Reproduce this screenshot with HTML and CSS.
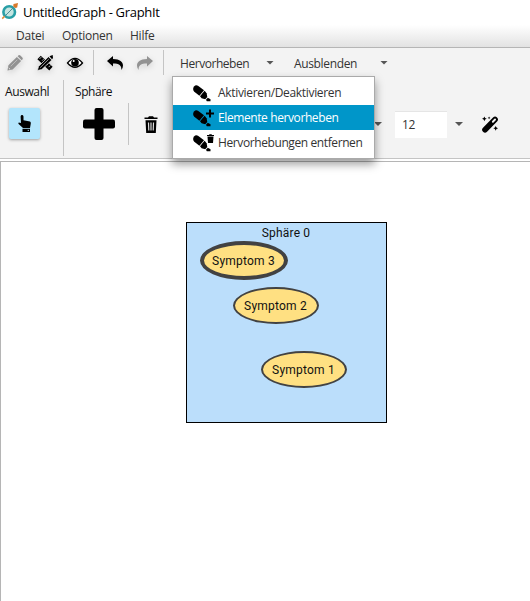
FILE: index.html
```html
<!DOCTYPE html>
<html lang="de">
<head>
<meta charset="utf-8">
<title>UntitledGraph - GraphIt</title>
<link rel="stylesheet" href="styles.css">
</head>
<body>
<svg class="defs" width="0" height="0">
  <symbol id="marker" viewBox="0 0 18 17">
    <path d="M1 1.600Q2.800-.5 5 .8L11 5.300 6.400 10.700 1.300 6.800Q-.9 4.200 1 1.600Z"/>
    <path d="M11.600 5.800 13.600 8.200 14.300 12 12.200 14.200 8.600 13.200 7 11.200Z"/>
    <path d="M14.800 12.700 17.500 14.200V16.300H13.800L13 14.700Z"/>
  </symbol>
  <symbol id="undo" viewBox="0 0 16 14">
    <path d="M0 5 6 0V3C13 3 16 6 16 9.500Q16 12 14.300 14C14.800 9.500 12 7.600 6 7.600V10.500Z"/>
  </symbol>
</svg>
<header class="titlebar">
  <svg class="logo" viewBox="0 0 18 18">
    <circle cx="8.200" cy="10" r="5.800" fill="#c4e5e1" stroke="#299fa6" stroke-width="2.600"/>
    <path d="M3.500 14.500 14 4" stroke="#4c8c93" stroke-width="1"/>
    <path d="M12.500 2 17 1l-.8 4.500-2 .5-2-1.800z" fill="#d8792b"/>
    <path d="M1.200 16.600 3.600 14.200" stroke="#e28a36" stroke-width="1.500"/>
  </svg>
  <h1>UntitledGraph - GraphIt</h1>
</header>
<nav class="menubar"><span class="m-datei">Datei</span><span class="m-opt">Optionen</span><span>Hilfe</span></nav>
<div class="toolbar">
  <div class="row-top">
    <svg class="pencil" viewBox="0 0 17 17"><path fill="#929292" d="M.5 16.500 1.500 11 10.500 2 15 6.500 6 15.500ZM11.300 1.200 12.300.3Q13.300-.2 14.200.6L16.300 2.700Q17.200 3.800 16.400 4.800L15.600 5.700Z"/><path d="M4 12 11 5" stroke="#c8c8c8" stroke-width=".8"/><path d="M1.800 13.800 3.300 15.200" stroke="#eee"/></svg>
    <svg class="tools" viewBox="0 0 17 16"><path d="M2.200 2.200 14.800 14" stroke="#000" stroke-width="5.200"/><path d="M4.500 1.800 2.700 3.700M7 4 5.500 5.500M11.800 8.600 10.300 10.200M14 10.700 12.400 12.400" stroke="#f3f3f3" stroke-width=".8"/><path d="M.3 16 1.700 11.500 12.200 1.300 15.800 4.800 5.100 15Z" stroke="#f3f3f3" stroke-width=".8"/><path d="M3.400 12.900 12.500 3.900" stroke="#bbb" stroke-width=".9"/><path d="M13.200.7 16.700-.4 17 2.600 16 4Z"/></svg>
    <svg class="eye" viewBox="0 0 16 12"><path d="M.5 6Q8-3.300 15.500 6 8 14.500.5 6Z" fill="#fff" stroke="#000" stroke-width="1.300"/><circle cx="8" cy="5.700" r="3.800"/><circle cx="6.700" cy="4" r="1" fill="#fff"/></svg>
    <i class="sep sep-a"></i>
    <svg class="undo"><use href="#undo"/></svg>
    <svg class="redo"><use href="#undo"/></svg>
    <i class="sep sep-b"></i>
    <span class="t-herv">Hervorheben</span><i class="caret"></i>
    <span class="t-aus">Ausblenden</span><i class="caret"></i>
  </div>
  <div class="row-main">
    <section class="group pick"><h2>Auswahl</h2>
      <button class="select"><svg viewBox="0 0 14 17"><path d="M2.600 1.400Q2.800 0 4 0T5.500 1.400V5.200L12 6.600Q13 7 12.800 8.500L12 13H5L.6 9Q-.1 8.100.8 7.400L3 8.100ZM4.500 13.800H12V17H4.500Z"/><path d="M9.700 15.400h1.200" stroke="#b3e5fc"/></svg></button>
    </section>
    <section class="group sphere"><h2>Sphäre</h2>
      <svg class="plus" viewBox="0 0 32 32"><rect x="11.500" width="9" height="32" rx="2"/><rect y="11.500" width="32" height="9" rx="2"/></svg>
    </section>
    <i class="sep sep-c"></i>
    <svg class="trash" viewBox="0 0 14 17"><path d="M.5 1.500H4L5 .3H9L10 1.500h3.500V3H.5ZM1.500 4.300h11L11.800 17H2.200Z"/><path d="M4.500 6.500 4.800 14.500M7 6.500v8M9.500 6.500 9.200 14.500" stroke="#ddd" stroke-width="1.200"/></svg>
    <i class="caret caret-c"></i>
    <div class="size">12</div>
    <i class="caret caret-d"></i>
    <svg class="wand" viewBox="0 0 18 17"><path d="M3.200 14 13.800 3.300" stroke="#000" stroke-width="6" stroke-linecap="round"/><path d="M11.500 5.600 13.800 3.200" stroke="#f3f3f3" stroke-width="2" stroke-linecap="round"/><path d="M2.500 0 3.300 1.700 5 2.500 3.300 3.300 2.500 5 1.700 3.300 0 2.500 1.700 1.700ZM7.500 0 8 1 9 1.500 8 2 7.500 3 7 2 6 1.500 7 1ZM14.500 10 15.300 11.700 17 12.500 15.300 13.300 14.500 15 13.700 13.300 12 12.500 13.700 11.700Z"/></svg>
  </div>
  <ul class="dropdown">
    <li><svg viewBox="0 0 22 18"><use href="#marker" y="1" width="18" height="17"/></svg><span class="d1">Aktivieren/Deaktivieren</span></li>
    <li class="active"><svg viewBox="0 0 22 18"><use href="#marker" y="1" width="18" height="17"/><path d="M17 .5v8M13 4.500h8" stroke="#000" stroke-width="2"/></svg><span>Elemente hervorheben</span></li>
    <li><svg viewBox="0 0 22 18"><use href="#marker" y="1" width="18" height="17"/><path d="M14 1h2l.5-.8h2L19 1h2v1h-7ZM14.500 2.500h6L20 9h-5Z"/></svg><span>Hervorhebungen entfernen</span></li>
  </ul>
</div>
<main class="canvas">
  <div class="sphere-box">
    <span class="sphere-title">Sphäre 0</span>
    <div class="node n3">Symptom 3</div>
    <div class="node n2">Symptom 2</div>
    <div class="node n1">Symptom 1</div>
  </div>
</main>
</body>
</html>
```
FILE: styles.css
```css
* { box-sizing: border-box; }
body { margin: 0; width: 530px; height: 601px; overflow: hidden; display: flex; flex-direction: column; background: #fff; font: 12px/16px "Open Sans", "Noto Sans", sans-serif; letter-spacing: -.4px; color: #333; }
h1, h2, ul { margin: 0; padding: 0; font-weight: 400; }
svg { display: block; flex: none; overflow: visible; }
.defs { position: absolute; }
.titlebar { height: 25px; display: flex; align-items: center; color: #000; }
.logo { width: 18px; height: 18px; margin: -4px 4px 0 1px; }
h1 { font-size: 13px; line-height: 16px; margin-top: -1px; letter-spacing: -.3px; white-space: nowrap; }
.menubar { height: 23px; display: flex; align-items: center; padding-left: 16px; letter-spacing: -.25px; background: linear-gradient(#fff, #e2e2e2); border-bottom: 1px solid #b5b5b5; }
.m-datei { width: 46px; }
.m-opt { width: 68px; }
.toolbar { position: relative; height: 111px; background: #f3f3f3; border-bottom: 1px solid #c4c4c4; }
.row-top { height: 29px; display: flex; align-items: center; padding-left: 7px; }
.pencil { width: 16px; height: 16px; margin-right: 14px; }
.tools { width: 16px; height: 16px; margin-right: 14px; }
.eye { width: 16px; height: 12px; }
.pencil, .tools, .eye, .undo, .redo { filter: drop-shadow(0 2px 3px rgba(0,0,0,.15)); }
.sep { width: 1px; background: #c4c4c4; flex: none; }
.sep-a, .sep-b { height: 25px; }
.sep-a { margin-left: 10px; }
.undo, .redo { width: 16px; height: 14px; }
.undo { margin-left: 13px; }
.redo { margin: 0 10px 0 14px; transform: scaleX(-1); fill: #929292; }
.t-herv, .t-aus { width: 86px; padding-top: 2px; letter-spacing: -.45px; white-space: nowrap; }
.t-herv { margin-left: 16px; }
.t-aus { margin-left: 20px; letter-spacing: -.35px; }
.caret { width: 8px; height: 4px; background: #555; clip-path: polygon(0 0, 100% 0, 50% 100%); flex: none; }
.row-main { height: 81px; display: flex; align-items: flex-start; }
.group { height: 76px; margin-top: 3px; }
.group h2 { font-size: 12px; line-height: 16px; margin-top: 4px; color: #111; }
.pick { width: 64px; padding-left: 5px; border-right: 1px solid #c4c4c4; }
.sphere { width: 64px; padding-left: 11px; }
.select { display: flex; align-items: center; justify-content: center; width: 31px; height: 31px; margin: 8px 0 0 4px; padding: 0; border: 0; border-radius: 2px; background: #b3e5fc; box-shadow: 0 1px 3px rgba(0,0,0,.35); }
.select svg { width: 14px; height: 17px; }
.plus { width: 32px; height: 32px; margin: 8px 0 0 8px; }
.sep-c { height: 42px; margin-top: 26px; }
.trash { width: 14px; height: 17px; margin: 39px 0 0 15px; }
.caret-c { margin: 45px 13px 0 216px; }
.size { width: 52px; height: 27px; margin-top: 34px; padding: 5px 7px; line-height: 16px; background: #fff; border-top: 1px solid #e5e5e5; }
.caret-d { margin: 45px 0 0 8px; }
.wand { width: 17px; height: 17px; margin: 39px 0 0 19px; }
.dropdown { position: absolute; left: 172px; top: 28px; width: 203px; height: 83px; padding: 3px 0; list-style: none; background: #fff; border: 1px solid #aaa; box-shadow: 0 5px 9px rgba(0,0,0,.4); }
.dropdown li { height: 25px; display: flex; align-items: center; padding-left: 20px; white-space: nowrap; }
.dropdown span { padding-top: 1px; }
.dropdown .d1 { letter-spacing: -.33px; }
.dropdown svg { width: 22px; height: 18px; margin-right: 3px; }
.dropdown .active { background: #0096c9; color: #fff; }
.canvas { flex: 1; margin-top: 2px; border: 1px solid #b5b5b5; border-width: 1px 0 0 1px; font-family: Roboto, sans-serif; letter-spacing: .2px; color: #111; }
.sphere-box { position: relative; width: 201px; height: 201px; margin: 60px 0 0 185px; padding: 2px 1px 0 0; border: 1px solid #000; background: #bbdefb; text-align: center; }
.node { position: absolute; display: flex; align-items: center; justify-content: center; width: 86px; height: 37px; padding-right: 1px; border: 2px solid #424242; border-radius: 50%; background: #ffe082; white-space: nowrap; }
.n3 { left: 13px; top: 18px; width: 88px; height: 39px; border-width: 4px; }
.n2 { left: 46px; top: 64px; }
.n1 { left: 74px; top: 128px; }
```
